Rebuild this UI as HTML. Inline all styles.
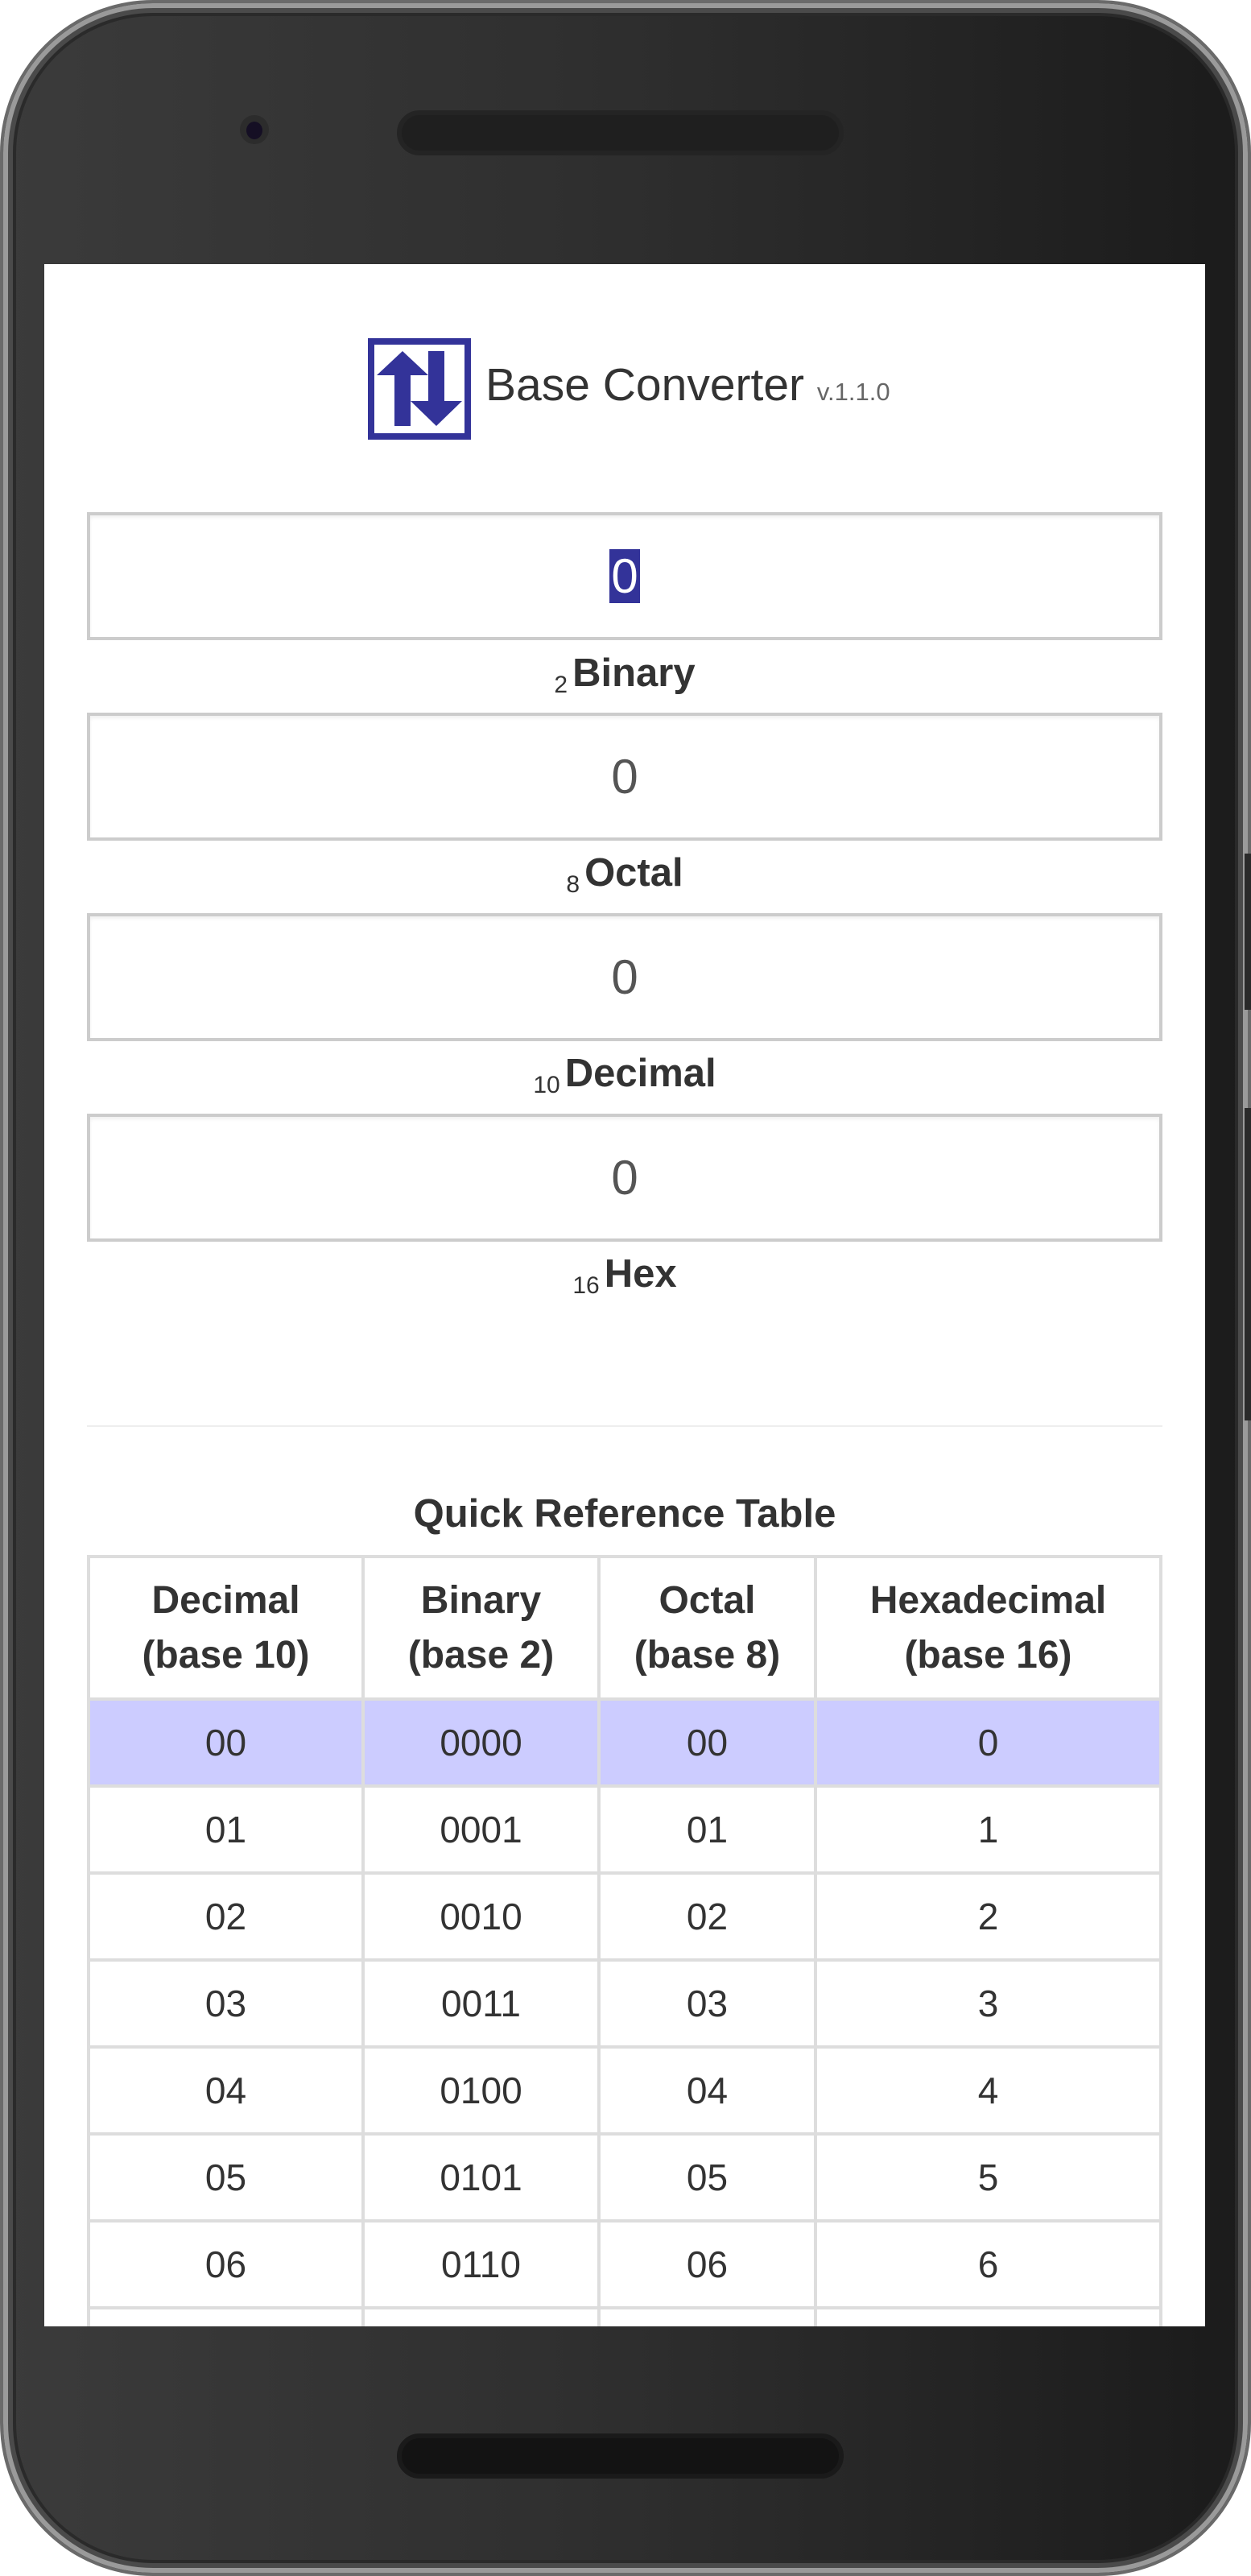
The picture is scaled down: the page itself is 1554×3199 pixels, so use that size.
<!DOCTYPE html>
<html><head><meta charset="utf-8">
<style>
*{margin:0;padding:0;box-sizing:border-box}
html,body{width:1554px;height:3199px;background:#fff;overflow:hidden;font-family:"Liberation Sans",Arial,sans-serif}
.phone{position:absolute;left:0;top:0;width:1554px;height:3199px;border-radius:190px;background:linear-gradient(90deg,#3b3b3b 0%,#2e2e2e 50%,#1b1b1b 100%);border:4px solid #6a6a6a;box-shadow:inset 0 0 0 6px #9a9a9a,inset 0 0 0 12px #4a4a4a,inset 0 0 0 16px #2a2a2a}
.cam{position:absolute;left:294px;top:139px;width:36px;height:36px;border-radius:50%;background:#2c2c2c}
.cam:after{content:"";position:absolute;left:8px;top:8px;width:20px;height:22px;border-radius:50%;background:#150f24}
.spk{position:absolute;left:489px;width:555px;height:56px;border-radius:28px;background:#1f1f1f;border:6px solid #242424}
.btn{position:absolute;left:1542px;width:8px;background:#2a2a2a}
.screen{position:absolute;left:51px;top:324px;width:1442px;height:2561px;background:#fff;overflow:hidden}
.a{position:absolute}
.inp{position:absolute;left:53px;width:1336px;height:159px;border:4px solid #ccc;box-shadow:inset 0 3px 4px rgba(0,0,0,.06);text-align:center;font-size:60px;line-height:151px;color:#555}
.lbl{position:absolute;left:0;width:1442px;text-align:center;font-weight:bold;font-size:49px;color:#333}
.lbl sub{font-weight:normal;font-size:30px;color:#333;vertical-align:-8px;margin-right:6px}
table{position:absolute;left:53px;top:1603px;width:1336px;border-collapse:collapse;color:#333}
td,th{border:4px solid #ddd;text-align:center;font-size:46px}
th{height:177px;line-height:68px;font-weight:bold;font-size:48px}
td{height:108px}
tr.h td{background:#ccccff}
</style></head><body>
<div class="phone">
<div class="cam"></div>
<div class="spk" style="top:133px"></div>
<div class="spk" style="top:3018px;background:#131313;border-color:#1a1a1a"></div>
<div class="btn" style="top:1056px;height:194px"></div>
<div class="btn" style="top:1372px;height:388px"></div>
<div class="screen">
<svg class="a" style="left:402px;top:92px" width="128" height="126" viewBox="0 0 128 126">
<rect x="4" y="4" width="120" height="118" fill="none" stroke="#333399" stroke-width="8"/>
<polygon fill="#333399" points="43,16 75,46 53,46 53,109 33,109 33,46 11,46"/>
<polygon fill="#333399" points="75,16 95,16 95,78 117,78 85,109 53,78 75,78"/>
</svg>
<div class="a" style="left:548px;top:117px;font-size:57px;color:#333;white-space:nowrap">Base Converter <span style="font-size:31px;color:#666">v.1.1.0</span></div>
<div class="inp" style="top:308px"><span style="background:#333399;color:#fff;padding:0 2px">0</span></div>
<div class="lbl" style="top:480px"><sub>2</sub>Binary</div>
<div class="inp" style="top:557px">0</div>
<div class="lbl" style="top:728px"><sub>8</sub>Octal</div>
<div class="inp" style="top:806px">0</div>
<div class="lbl" style="top:977px"><sub>10</sub>Decimal</div>
<div class="inp" style="top:1055px">0</div>
<div class="lbl" style="top:1226px"><sub>16</sub>Hex</div>
<div class="a" style="left:53px;top:1442px;width:1336px;height:2px;background:#eee"></div>
<div class="lbl" style="top:1524px">Quick Reference Table</div>
<table>
<tr><th style="width:341px">Decimal<br>(base 10)</th><th style="width:293px">Binary<br>(base 2)</th><th style="width:269px">Octal<br>(base 8)</th><th>Hexadecimal<br>(base 16)</th></tr>
<tr class="h"><td>00</td><td>0000</td><td>00</td><td>0</td></tr>
<tr><td>01</td><td>0001</td><td>01</td><td>1</td></tr>
<tr><td>02</td><td>0010</td><td>02</td><td>2</td></tr>
<tr><td>03</td><td>0011</td><td>03</td><td>3</td></tr>
<tr><td>04</td><td>0100</td><td>04</td><td>4</td></tr>
<tr><td>05</td><td>0101</td><td>05</td><td>5</td></tr>
<tr><td>06</td><td>0110</td><td>06</td><td>6</td></tr>
<tr><td>07</td><td>0111</td><td>07</td><td>7</td></tr>
</table>
</div>
</div>
</body></html>
